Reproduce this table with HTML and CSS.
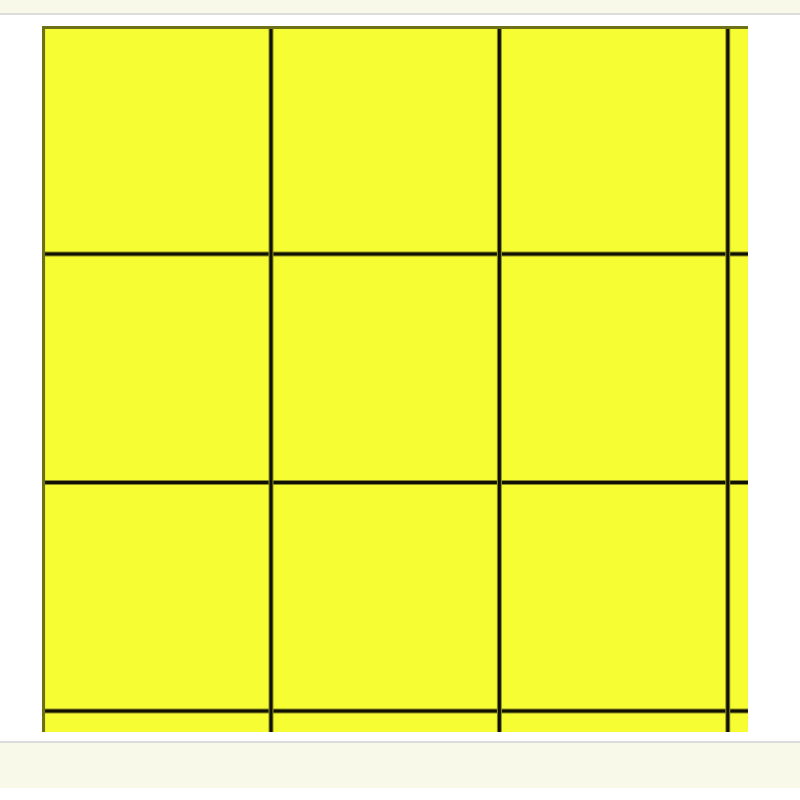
FILE: index.html
```html
<!DOCTYPE html>
<html>
<head>
<meta charset="utf-8">
<link rel="stylesheet" href="styles.css">
</head>
<body>
<div class="topbar"></div>
<main class="stage">
  <div class="board"></div>
</main>
<div class="bottombar"></div>
</body>
</html>
```
FILE: styles.css
```css
html, body {
  margin: 0;
  padding: 0;
  background: #ffffff;
  font-family: "Liberation Sans", Arial, sans-serif;
}
.topbar {
  height: 13px;
  background: #f9f9ea;
  border-bottom: 2px solid #dcdcdc;
}
.stage {
  padding: 11px 0 9px 42px;
}
.board {
  width: 706px;
  height: 706px;
  background-color: #f7fd33;
  background-image:
    linear-gradient(90deg, #6e7018 0, #6e7018 2.5px, transparent 2.5px),
    linear-gradient(180deg, #6e7018 0, #6e7018 2.5px, transparent 2.5px),
    repeating-linear-gradient(90deg, #8a8c22 0, #8a8c22 1px, #111100 1px, #111100 3.5px, #8a8c22 3.5px, #8a8c22 4.5px, transparent 4.5px, transparent 228.4px),
    repeating-linear-gradient(180deg, #8a8c22 0, #8a8c22 1px, #111100 1px, #111100 3.5px, #8a8c22 3.5px, #8a8c22 4.5px, transparent 4.5px, transparent 228.5px);
  background-repeat: no-repeat, no-repeat, repeat, repeat;
  background-size: 100% 100%, 100% 100%, 228.4px 100%, 100% 228.5px;
  background-position: 0 0, 0 0, 226.5px 0, 0 225.5px;
}
.bottombar {
  height: 45px;
  background: #f9f9ea;
  border-top: 2px solid #dcdcdc;
}
```
